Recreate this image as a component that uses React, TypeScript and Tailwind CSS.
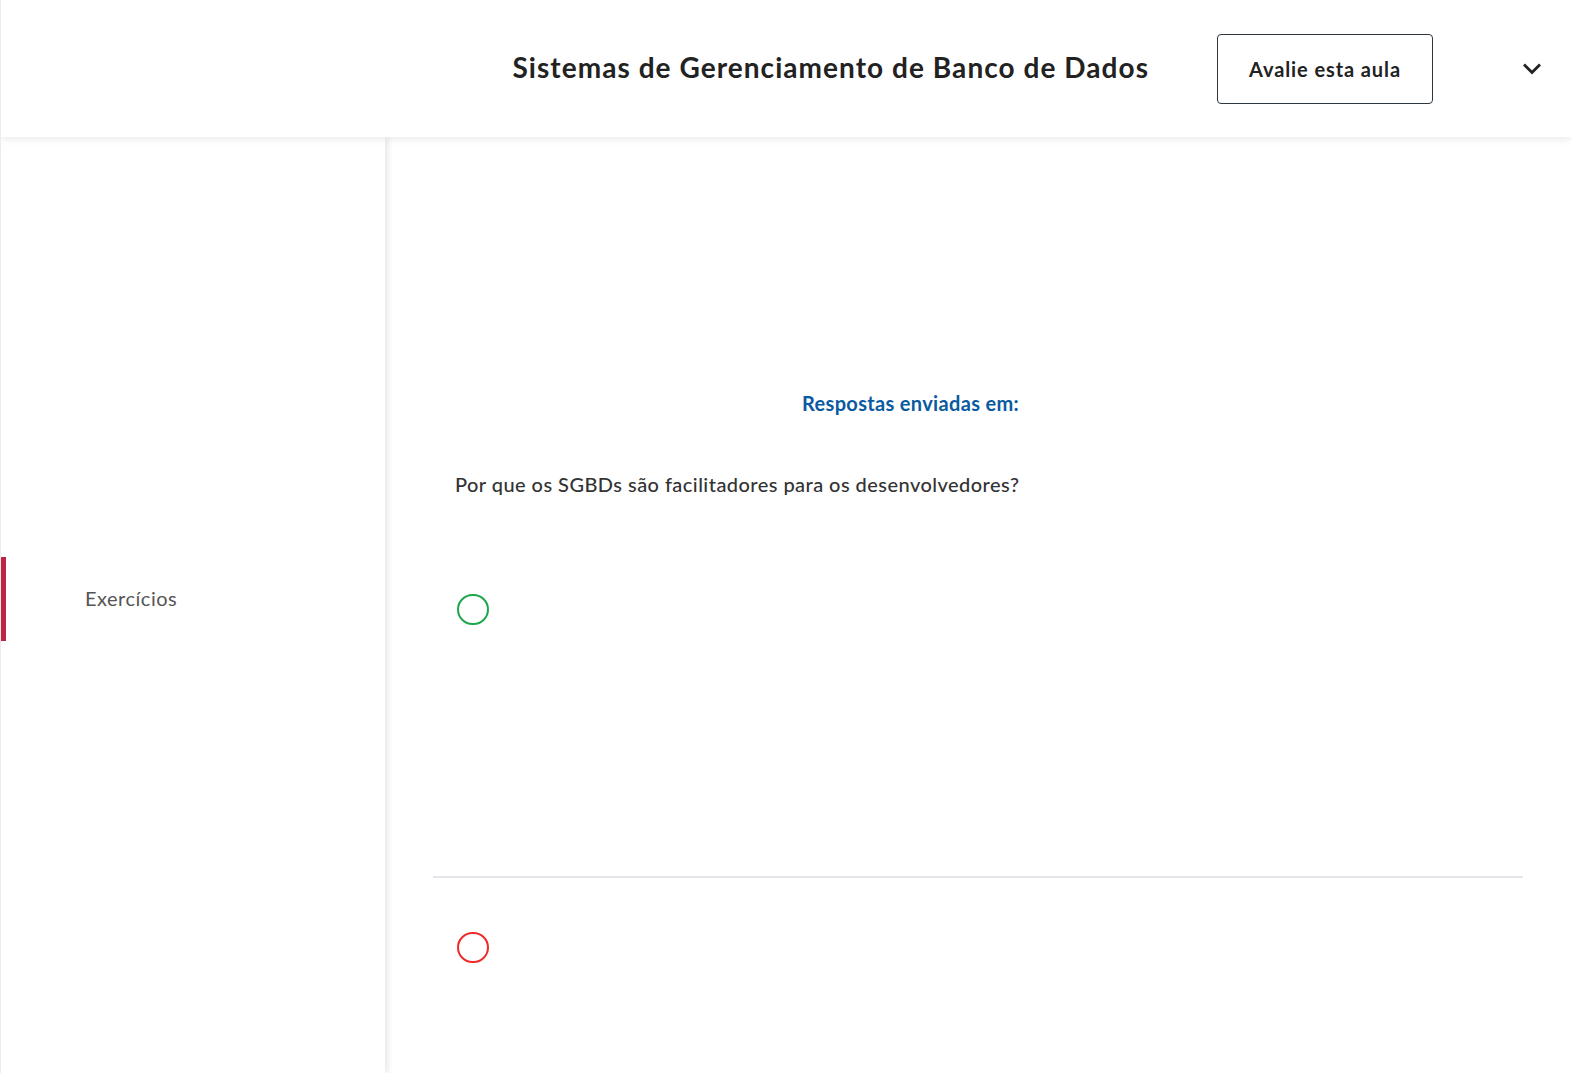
import React from "react";

const Chevron = () => (
  <svg width="18" height="12" viewBox="0 0 18 12" fill="none">
    <polyline
      points="2,2.5 9,9.5 16,2.5"
      stroke="#222"
      strokeWidth="2.8"
      strokeLinecap="square"
    />
  </svg>
);

const Option = ({ color }: { color: string }) => (
  <div className={`w-[32px] h-[31px] rounded-full border-[2.5px] ${color}`} />
);

const App = () => {
  return (
    <div
      className="w-[1571px] h-[1073px] bg-white border-l border-[#ececec] flex flex-col overflow-hidden"
      style={{ fontFamily: "Lato, 'Open Sans', sans-serif" }}
    >
      <header className="relative z-20 h-[137px] shrink-0 bg-white flex items-center justify-end pr-[30px] shadow-[0_2px_8px_rgba(0,0,0,0.09)]">
        <h1 className="mb-[4px] text-[28px] font-bold text-[#222] tracking-[1.05px]">
          Sistemas de Gerenciamento de Banco de Dados
        </h1>
        <button className="ml-[68px] w-[216px] h-[70px] rounded-[4px] border-[1.5px] border-[#2e3640] text-[20px] font-bold text-[#222] tracking-[0.9px]">
          Avalie esta aula
        </button>
        <div className="ml-[90px] flex items-center">
          <Chevron />
        </div>
      </header>

      <div className="flex flex-1">
        <aside className="relative z-10 w-[384px] shrink-0 bg-white shadow-[3px_0_6px_rgba(0,0,0,0.09)] pt-[420px]">
          <div className="h-[84px] border-l-[5px] border-[#bf2442] flex items-center pl-[79px] pb-[3px]">
            <span className="text-[20px] text-[#555] tracking-[0.5px]">Exercícios</span>
          </div>
        </aside>

        <main className="flex-1 px-12 pt-[252px]">
          <p className="pl-[369px] text-[20px] leading-[28px] font-bold text-[#0a5aa0] tracking-[0.33px]">
            Respostas enviadas em:
          </p>
          <p className="mt-[53px] pl-[22px] text-[20px] leading-[28px] font-medium text-[#333] tracking-[0.45px]">
            Por que os SGBDs são facilitadores para os desenvolvedores?
          </p>
          <div className="mt-[96px] pl-[24px]">
            <Option color="border-[#1fa64d]" />
          </div>
          <div className="mt-[251px] h-[2px] bg-[#e3e7eb]" />
          <div className="mt-[54px] pl-[24px]">
            <Option color="border-[#ee2a2a]" />
          </div>
        </main>
      </div>
    </div>
  );
};

export default App;
